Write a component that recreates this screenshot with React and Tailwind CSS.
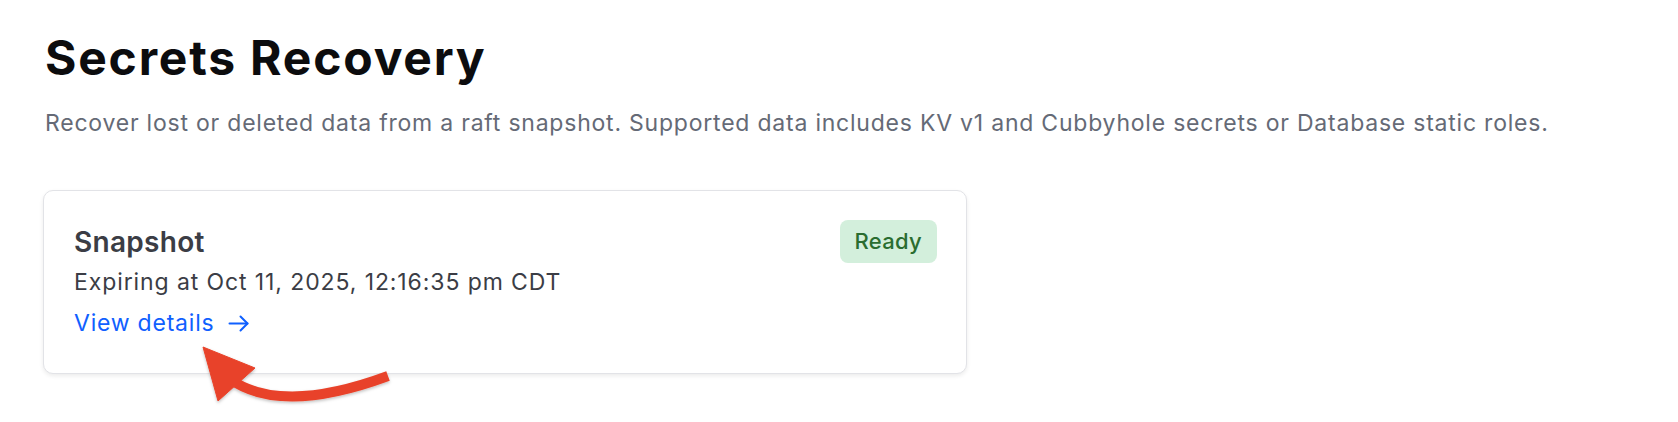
import { useState } from 'react';

function ArrowRight() {
  return (
    <svg width="21" height="17" viewBox="0 0 21 17" fill="none" stroke="currentColor" strokeWidth="2" strokeLinecap="round" strokeLinejoin="round">
      <path d="M1.5 8.5H19.5" />
      <path d="M12.5 1.5l7 7-7 7" />
    </svg>
  );
}

function Callout() {
  return (
    <svg className="absolute left-0 top-0 pointer-events-none" width="1678" height="422" viewBox="0 0 1678 422">
      <defs>
        <filter id="soft" x="-20%" y="-20%" width="140%" height="160%">
          <feDropShadow dx="0" dy="1.5" stdDeviation="1.5" floodColor="#000" floodOpacity="0.25" />
        </filter>
      </defs>
      <g filter="url(#soft)" fill="#e8432a" stroke="#e8432a">
        <path d="M388 376 Q288 413 236 383" fill="none" strokeWidth="10" strokeLinecap="butt" />
        <path d="M203 347 L255 368 L218 401 Z" strokeWidth="1" strokeLinejoin="round" />
      </g>
    </svg>
  );
}

export default function App() {
  const [snapshot] = useState({
    name: 'Snapshot',
    expires: 'Oct 11, 2025, 12:16:35 pm CDT',
    status: 'Ready',
  });

  return (
    <div className="relative w-[1678px] h-[422px] bg-white overflow-hidden font-['Inter','Liberation_Sans',sans-serif]">
      <div className="pl-[45px] pt-[28px]">
        <h1 className="text-[48px] leading-[60px] font-bold tracking-[1.8px] text-[#0c0c0e]">
          Secrets Recovery
        </h1>
        <p className="mt-[20px] text-[23px] leading-[31px] tracking-[0.78px] text-[#656a76]">
          Recover lost or deleted data from a raft snapshot. Supported data includes KV v1 and Cubbyhole secrets or Database static roles.
        </p>

        {/* Snapshot card */}
        <div className="mt-[51px] w-[924px] ml-[-2px] rounded-[10px] border border-[#e2e3e7] bg-white shadow-[0_2px_4px_rgba(0,0,0,0.08)] pl-[30px] pr-[29px] pt-[32px] pb-[34px] flex items-start justify-between">
          <div>
            <h3 className="text-[28px] leading-[38px] font-semibold tracking-[0.3px] text-[#3b3d45]">
              {snapshot.name}
            </h3>
            <p className="mt-[6px] text-[23px] leading-[31px] tracking-[0.9px] text-[#3b3d45]">
              Expiring at {snapshot.expires}
            </p>
            <a href="#" className="mt-[10px] flex items-center gap-[14px] text-[23px] leading-[31px] tracking-[0.78px] text-[#1060ff]">
              View details
              <ArrowRight />
            </a>
          </div>
          <span className="-mt-[3px] rounded-[8px] bg-[#d3efdc] px-[15px] py-[6px] text-[22px] leading-[31px] font-medium tracking-[0.3px] text-[#2a6d30]">
            {snapshot.status}
          </span>
        </div>
      </div>

      <Callout />
    </div>
  );
}
